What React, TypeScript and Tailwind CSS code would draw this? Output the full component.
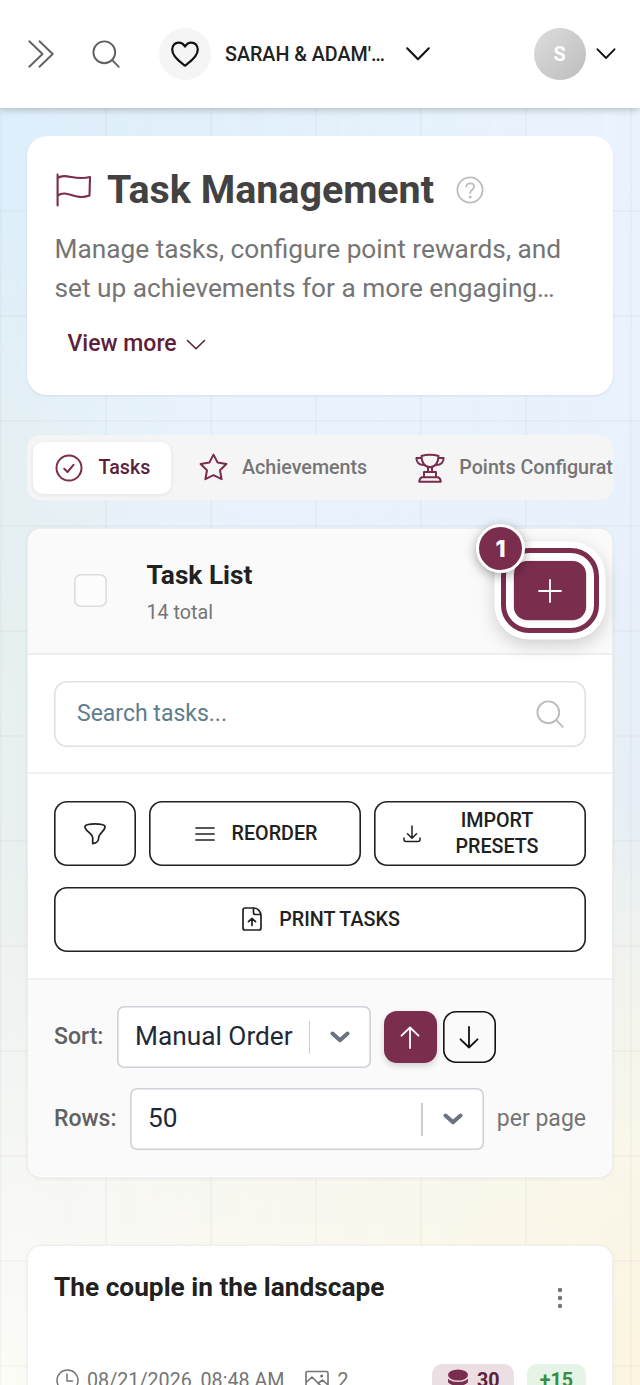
import React from 'react';
import clsx from 'clsx';

interface IconProps {
  w: number;
  h: number;
  stroke?: number;
  className?: string;
  children: React.ReactNode;
}

const Icon: React.FC<IconProps> = ({ w, h, stroke = 2, className, children }) => (
  <svg
    width={w}
    height={h}
    viewBox={`0 0 ${w} ${h}`}
    fill="none"
    stroke="currentColor"
    strokeWidth={stroke}
    strokeLinecap="round"
    strokeLinejoin="round"
    className={clsx('block shrink-0', className)}
  >
    {children}
  </svg>
);

const SearchIcon = ({ className }: { className?: string }) => (
  <Icon w={28} h={28} stroke={1.9} className={className}>
    <circle cx="12.3" cy="12.3" r="10.9" />
    <path d="M20.2 20.2 26.8 26.8" />
  </Icon>
);

const Header = () => (
  <header className="relative z-10 flex h-[108px] items-center bg-white pr-[24.5px] pl-[27.5px] shadow-[0_2px_7px_rgba(0,0,0,0.22)]">
    <Icon w={26} h={28} stroke={1.9} className="text-[#616161]">
      <path d="M1.3 1.3 14.5 14 1.3 26.7M11.5 1.3 24.7 14 11.5 26.7" />
    </Icon>
    <SearchIcon className="ml-[38.5px] text-[#616161]" />
    <div className="ml-[39px] flex size-[52px] items-center justify-center rounded-full bg-[#f5f5f5]">
      <Icon w={28} h={26} stroke={2.2} className="text-[#111111]">
        <path d="M14 24.6C10.2 21.6 1.2 16.6 1.2 8.6 1.2 4.6 4 1.6 7.6 1.6c2.7 0 4.9 1.4 6.4 3.9 1.5-2.5 3.7-3.9 6.4-3.9 3.6 0 6.4 3 6.4 7C26.8 16.6 17.8 21.6 14 24.6Z" />
      </Icon>
    </div>
    <span className="ml-[14px] w-[162px] pt-px text-[19.7px] font-medium whitespace-nowrap text-[#212121]">
      SARAH &amp; ADAM&apos;…
    </span>
    <Icon w={24} h={14} stroke={2.1} className="ml-[19px] text-[#111111]">
      <path d="M1.2 1.3 12 12.2 22.8 1.3" />
    </Icon>
    <div className="ml-auto flex size-[52px] items-center justify-center rounded-full bg-linear-to-br from-[#dddddd] to-[#bdbdbd] pt-px text-[19.7px] font-bold text-white">
      S
    </div>
    <Icon w={20} h={12} stroke={1.9} className="ml-[10px] text-[#111111]">
      <path d="M1.5 1.3 10 10 18.5 1.3" />
    </Icon>
  </header>
);

const PageIntro = () => (
  <section className="h-[259px] rounded-[20px] bg-white px-[27.5px] pt-[30px] shadow-[0_1px_3px_rgba(0,0,0,0.08)]">
    <div className="flex h-[48px] items-center">
      <Icon w={36} h={34} stroke={2.1} className="ml-[1.5px] text-[#7b2d4e]">
        <path d="M1.6 1.5V32.5M1.6 5.2C10-.5 18 8 34 4L33.5 22.5C18 28 12 16 1.6 22.5" />
      </Icon>
      <h1 className="ml-[15px] text-[39.4px] leading-[48px] font-bold whitespace-nowrap text-[#424242]">
        Task Management
      </h1>
      <Icon w={28} h={28} stroke={1.8} className="ml-[22px] text-[#bdbdbd]">
        <circle cx="14" cy="14" r="12.6" />
        <path d="M10.3 10.6C10.5 8.5 12 7.3 14.2 7.3c2.3 0 3.9 1.3 3.9 3.3 0 3.2-3.9 3-3.9 6.5" />
        <circle cx="14.2" cy="21" r=".6" />
      </Icon>
    </div>
    <p className="mt-[16px] text-[26.25px] leading-[39.4px] whitespace-nowrap text-[#757575]">
      Manage tasks, configure point rewards, and
      <br />
      set up achievements for a more engaging…
    </p>
    <button className="mt-[21px] ml-[13px] flex items-center text-[23px] leading-[28px] font-medium text-[#5e2039]">
      View more
      <Icon w={20} h={12} stroke={1.6} className="mt-[2px] ml-[9px]">
        <path d="M1.5 1.5 10 9.8 18.5 1.5" />
      </Icon>
    </button>
  </section>
);

const Tabs = () => (
  <nav className="mt-[40px] flex h-[65px] items-center overflow-hidden rounded-[13px] bg-[#f5f5f5] pl-[6px] text-[19.7px] font-medium whitespace-nowrap text-[#757575]">
    <button className="flex h-[52px] w-[138px] shrink-0 items-center rounded-[10px] bg-white pl-[22px] text-[#5e2039] shadow-[0_1px_4px_rgba(0,0,0,0.08)]">
      <Icon w={28} h={28} stroke={2} className="text-[#7b2d4e]">
        <circle cx="14" cy="14" r="12.5" />
        <path d="M9.2 14.8 12.5 18 18.5 10.8" />
      </Icon>
      <span className="ml-[15.5px]">Tasks</span>
    </button>
    <button className="flex shrink-0 items-center pl-[28px]">
      <Icon w={29} h={28} stroke={2} className="text-[#7b2d4e]">
        <path d="M14.5 1.6 18.6 9.5 27.4 11 21 17.3 22.6 26.2 14.5 22.2 6.4 26.2 8 17.3 1.6 11 10.4 9.5Z" />
      </Icon>
      <span className="ml-[14px]">Achievements</span>
    </button>
    <button className="flex shrink-0 items-center pl-[48px]">
      <Icon w={30} h={30} stroke={2} className="text-[#7b2d4e]">
        <path d="M6.5 3C11 1.3 19 1.3 23.5 3 23.5 9 20.5 14.3 15 14.3S6.5 9 6.5 3ZM6.5 5H1.4C1.5 9.5 4.5 12 9 12M23.5 5h5.1C28.5 9.5 25.5 12 21 12M13 14.5V19M17 14.5V19M9 24.2V19h12v5.2M7 24.2H23Q25.5 25.2 25.8 28.7H4.2Q4.5 25.2 7 24.2Z" />
      </Icon>
      <span className="ml-[14px]">Points Configuration</span>
    </button>
  </nav>
);

const OutlineButton = ({ className, children }: { className?: string; children: React.ReactNode }) => (
  <button
    className={clsx(
      'flex h-[65px] items-center justify-center rounded-[13px] bg-white text-[19.7px] leading-[26px] font-medium text-[#212121] shadow-[inset_0_0_0_1.6px_#212121]',
      className
    )}
  >
    {children}
  </button>
);

const Select = ({ value, className }: { value: string; className: string }) => (
  <div
    className={clsx(
      'flex h-[62px] items-center rounded-[7px] bg-white pl-[18px] text-[26.25px] text-[#1f2937] shadow-[inset_0_0_0_1.6px_#cdd1d8]',
      className
    )}
  >
    <span className="flex-1 whitespace-nowrap">{value}</span>
    <span className="h-[33px] w-[1.5px] bg-[#cccccc]" />
    <Icon w={20} h={12} stroke={4} className="mr-[21px] ml-[20px] text-[#6b7280]">
      <path d="M2.5 2.5 10 9.2 17.5 2.5" />
    </Icon>
  </div>
);

const AddButton = () => (
  <div className="relative -mt-px">
    <button className="flex h-[59px] w-[72px] items-center justify-center rounded-[13px] bg-[#7b2d4e] text-white shadow-[0_3px_7px_rgba(0,0,0,0.22)]">
      <Icon w={24} h={24} stroke={1.8}>
        <path d="M12 1V23M1 12H23" />
      </Icon>
    </button>
    {/* Highlight ring */}
    <div className="pointer-events-none absolute -inset-[13px] rounded-[28px] border-[5px] border-[#7b2d4e] shadow-[0_0_0_6.5px_#fff,0_6px_18px_6px_rgba(0,0,0,0.18),inset_0_0_0_7px_rgba(255,255,255,0.85)]" />
    <div className="absolute -top-[37px] -left-[38px] flex size-[49px] items-center justify-center rounded-full border-[3px] border-white bg-[#7b2d4e] pt-px font-['Inter','Roboto',sans-serif] text-[23px] font-extrabold text-white shadow-[0_3px_12px_rgba(0,0,0,0.35)]">
      1
    </div>
  </div>
);

const TaskList = () => (
  <section className="mt-[28px] h-[650px] rounded-[14px] border border-[#eeeeee] bg-white shadow-[0_1px_4px_rgba(0,0,0,0.06)]">
    <div className="flex h-[126px] items-center rounded-t-[13px] border-b-2 border-[#eeeeee] bg-[#fafafa] pr-[26px] pl-[46px]">
      <div className="-mt-px size-[33px] rounded-[7px] bg-[#fcfcfc] shadow-[inset_0_0_0_1.6px_#dcdcdc]" />
      <div className="ml-[39.5px] flex-1 pt-[4px]">
        <h2 className="text-[26.25px] leading-[36px] font-bold text-[#212121]">Task List</h2>
        <p className="mt-[4px] text-[19.7px] leading-[32px] text-[#757575]">14 total</p>
      </div>
      <AddButton />
    </div>

    <div className="h-[119px] border-b-2 border-[#f0f0f0] px-[26px] pt-[26px]">
      <div className="flex h-[65.5px] items-center justify-between rounded-[13px] pr-[22px] pl-[23px] shadow-[inset_0_0_0_1.6px_#e0e0e0]">
        <span className="text-[23px] text-[#5f7d8c]">Search tasks...</span>
        <SearchIcon className="text-[#bdbdbd]" />
      </div>
    </div>

    <div className="flex h-[206px] flex-col gap-[20.5px] border-b-2 border-[#f0f0f0] px-[26px] pt-[27px]">
      <div className="flex gap-[13px]">
        <OutlineButton className="w-[82px]">
          <Icon w={22} h={22} stroke={1.7}>
            <path d="M1 3.2C3 .2 19 .2 21 3.2 22 7 14.7 10.5 14.7 14.5 14.7 18 13.5 20 8.7 20.7V15C8.7 10.5 0 7.5 1 3.2Z" />
          </Icon>
        </OutlineButton>
        <OutlineButton className="w-[212px] pl-[2px]">
          <Icon w={20} h={14} stroke={1.7}>
            <path d="M1 1H19M1 7H19M1 13H19" />
          </Icon>
          <span className="ml-[17px] pt-px">REORDER</span>
        </OutlineButton>
        <OutlineButton className="flex-1 pr-[30px] pl-[29px]">
          <Icon w={18} h={18} stroke={1.5}>
            <path d="M9 1V13M4.5 8.7 9 13.2 13.5 8.7M1 13V14.5Q1 16.5 3 16.5H15Q17 16.5 17 14.5V13" />
          </Icon>
          <span className="flex-1 pt-px pl-[17px] text-center">
            IMPORT
            <br />
            PRESETS
          </span>
        </OutlineButton>
      </div>
      <OutlineButton className="pl-[2px]">
        <Icon w={20} h={24} stroke={1.7}>
          <path d="M3 1H11.5C16 1 19 4.5 19 9V21Q19 23 17 23H3Q1 23 1 21V3Q1 1 3 1ZM11.5 1V5.5Q11.5 7.5 13.5 7.5H18.5M10 18.5V11.7M6.5 14.7 10 11.3 13.5 14.7" />
        </Icon>
        <span className="ml-[17px] pt-px">PRINT TASKS</span>
      </OutlineButton>
    </div>

    <div className="flex h-[196px] flex-col gap-[20px] rounded-b-[13px] bg-[#fafafa] px-[26px] pt-[26px] text-[23px] text-[#757575]">
      <div className="flex items-center">
        <span className="w-[63px] font-medium text-[#616161]">Sort:</span>
        <Select value="Manual Order" className="w-[254px]" />
        <button className="ml-[13px] flex size-[52.5px] items-center justify-center rounded-[13px] bg-[#7b2d4e] text-white shadow-[0_3px_6px_rgba(0,0,0,0.16)]">
          <Icon w={20} h={23} stroke={1.8}>
            <path d="M10 22V1.5M1.5 9.7 10 1.5 18.5 9.7" />
          </Icon>
        </button>
        <button className="ml-[6.5px] flex size-[52.5px] items-center justify-center rounded-[13px] text-[#111111] shadow-[inset_0_0_0_1.6px_#111111]">
          <Icon w={20} h={23} stroke={1.8}>
            <path d="M10 1V21.5M1.5 13.3 10 21.5 18.5 13.3" />
          </Icon>
        </button>
      </div>
      <div className="flex items-center">
        <span className="w-[76px] font-medium text-[#616161]">Rows:</span>
        <Select value="50" className="w-[354px]" />
        <span className="ml-[13px] whitespace-nowrap">per page</span>
      </div>
    </div>
  </section>
);

const TaskCard = () => (
  <section className="mt-[66.5px] h-[220px] rounded-[14px] border border-[#eeeeee] bg-white px-[26px] pt-[23.5px] shadow-[0_1px_4px_rgba(0,0,0,0.06)]">
    <div className="flex justify-between">
      <h3 className="text-[26.25px] leading-[36px] font-bold text-[#212121]">
        The couple in the landscape
      </h3>
      <svg width="6" height="22" viewBox="0 0 6 22" className="mt-[17.5px] mr-[23.5px] fill-[#757575]">
        <circle cx="3" cy="3" r="2.2" />
        <circle cx="3" cy="11" r="2.2" />
        <circle cx="3" cy="19" r="2.2" />
      </svg>
    </div>
    <div className="mt-[55.5px] flex h-[33px] items-center text-[19.7px] whitespace-nowrap text-[#757575]">
      <Icon w={23} h={23} stroke={1.5} className="ml-[2px]">
        <circle cx="11.5" cy="11.5" r="10.5" />
        <path d="M11 5V12H16.5" />
      </Icon>
      <span className="ml-[8px]">08/21/2026, 08:48 AM</span>
      <Icon w={24} h={22} stroke={1.6} className="ml-[21px]">
        <path d="M1 3Q1 1.5 2.5 1.5H21.5Q23 1.5 23 3V19Q23 20.5 21.5 20.5H2.5Q1 20.5 1 19ZM1 12.5 7 7 17 17 M13 13.5 17.5 10 23 15" />
        <circle cx="16.7" cy="6" r=".8" />
      </Icon>
      <span className="ml-[8px]">2</span>
      <span className="ml-auto flex h-[33px] w-[82px] items-center rounded-[10px] bg-[#ebdfe4] pl-[16px] font-bold text-[#5e2039]">
        <svg width="20" height="24" viewBox="0 0 20 24" className="fill-[#7b2d4e]">
          <ellipse cx="10" cy="6" rx="10" ry="5.5" />
          <path d="M0 9.5C3 14 17 14 20 9.5V13C17 18 3 18 0 13ZM0 16C3 20.5 17 20.5 20 16V19C17 24.5 3 24.5 0 19Z" />
        </svg>
        <span className="ml-[9px]">30</span>
      </span>
      <span className="ml-[13px] flex h-[33px] w-[59px] items-center justify-center rounded-[10px] bg-[#e6f4e8] font-bold text-[#388e3c]">
        +15
      </span>
    </div>
  </section>
);

const Backdrop = () => (
  <div className="absolute inset-0">
    <div className="absolute inset-0 bg-[linear-gradient(180deg,#deeffb_0%,#deeffb_15%,#e5f0f3_32%,#e9f0ef_60%,#f1f4f2_75%,#f8f9f7_88%,#fcfcf8_100%)]" />
    <div className="absolute inset-0 bg-[linear-gradient(180deg,#ebf4fd_0%,#e8f1fc_36%,#e6eef5_58%,#f1f3ee_70%,#f9f7ea_82%,#fcf5e0_100%)] [mask-image:linear-gradient(90deg,transparent_0%,black_100%)]" />
    <div className="absolute inset-0 bg-[radial-gradient(ellipse_300px_250px_at_300px_420px,#e8f3fe_20%,transparent_100%)]" />
    {/* Grid lines */}
    <div className="absolute inset-0 bg-[linear-gradient(90deg,rgba(0,0,0,0.025)_1.6px,transparent_1.6px),linear-gradient(180deg,rgba(0,0,0,0.025)_1.6px,transparent_1.6px)] bg-[size:105px_105px]" />
  </div>
);

export default function App() {
  return (
    <div className="relative h-[1385px] w-[640px] overflow-hidden font-['Roboto',sans-serif]">
      <Backdrop />
      <Header />
      <main className="relative px-[27px] pt-[28px]">
        <PageIntro />
        <Tabs />
        <TaskList />
        <TaskCard />
      </main>
    </div>
  );
}
